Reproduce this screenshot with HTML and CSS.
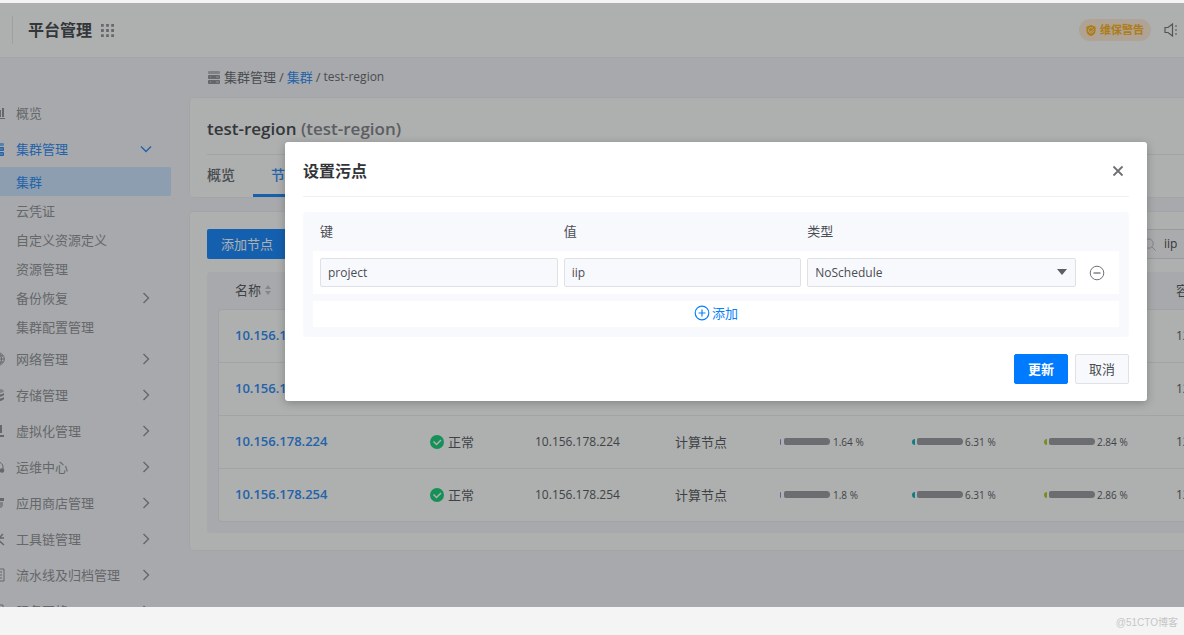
FILE: index.html
```html
<!DOCTYPE html>
<html lang="zh-CN">
<head>
<meta charset="utf-8">
<title>平台管理</title>
<link rel="stylesheet" href="styles.css">
</head>
<body>
<svg class="sprite" aria-hidden="true">
  <symbol id="right" viewBox="0 0 12 12"><path d="M3.5 1l5 5-5 5" fill="none" stroke="currentColor" stroke-width="1.4"/></symbol>
  <symbol id="down" viewBox="0 0 12 12"><path d="M1 3.5l5 5 5-5" fill="none" stroke="currentColor" stroke-width="1.4"/></symbol>
  <symbol id="server" viewBox="0 0 14 14"><rect x="1" y="1" width="12" height="3" rx="1" opacity=".6"/><rect x="1" y="5" width="12" height="4" rx="1"/><rect x="1" y="10" width="12" height="4" rx="1"/><path d="M3 7h1M3 12h1M9 7h3M9 12h3" stroke="#fff" stroke-width="1" opacity=".6"/></symbol>
  <symbol id="check" viewBox="0 0 14 14"><circle cx="7" cy="7" r="7"/><path d="M3.500 6.500l3 3 4.500-4.500" fill="none" stroke="#fff" stroke-width="1.500"/></symbol>
</svg>
<div class="app">
  <header class="topbar">
    <h1 class="brand">平台管理</h1>
    <svg class="dots" viewBox="0 0 14 14"><path d="M0 0h3v3H0zM5.500 0h3v3h-3zM11 0h3v3h-3zM0 5.500h3v3H0zM5.500 5.500h3v3h-3zM11 5.500h3v3h-3zM0 11h3v3H0zM5.500 11h3v3h-3zM11 11h3v3h-3z"/></svg>
    <span class="warn"><svg class="shield" viewBox="0 0 10 12"><path d="M5 0l5 2v4c0 3-2 5-5 6-3-1-5-3-5-6V2z"/><path d="M7.500 4A3 3 0 1 0 8 6.500M3.500 6l1.500 1.500 3-3" fill="none" stroke="#ffeed0" stroke-width="1"/></svg>维保警告</span>
    <svg class="speaker" viewBox="0 0 14 14" fill="none" stroke="currentColor" stroke-width="1.200"><path d="M1 4.500h3L8.500 1v12L4 9.500H1zM11 3h2M11 7h2M11 11h2" /></svg>
  </header>
  <div class="body">
    <nav class="side">
      <a class="item" href="#"><svg class="ico" viewBox="0 0 14 14"><path d="M1 12h13v1H1zM9 4h1v7H9zM11 2h2v9h-2z"/></svg><span>概览</span></a>
      <a class="item on" href="#"><svg class="ico"><use href="#server"/></svg><span>集群管理</span><svg class="arrow"><use href="#down"/></svg></a>
      <a class="item sub active" href="#"><span>集群</span></a>
      <a class="item sub" href="#"><span>云凭证</span></a>
      <a class="item sub" href="#"><span>自定义资源定义</span></a>
      <a class="item sub" href="#"><span>资源管理</span></a>
      <a class="item sub" href="#"><span>备份恢复</span><svg class="arrow"><use href="#right"/></svg></a>
      <a class="item sub" href="#"><span>集群配置管理</span></a>
      <a class="item" href="#"><svg class="ico" viewBox="0 0 14 14" fill="none" stroke="currentColor"><circle cx="7" cy="7" r="6.300"/><path d="M1 7h12M7 1v12M2 4h10M2 10h10"/><ellipse cx="7" cy="7" rx="3.500" ry="6.300"/></svg><span>网络管理</span><svg class="arrow"><use href="#right"/></svg></a>
      <a class="item" href="#"><svg class="ico" viewBox="0 0 14 14"><ellipse cx="7" cy="3" rx="6" ry="2" opacity=".6"/><path d="M1 5c2 2 10 2 12 0v2c-2 2.500-10 2.500-12 0zM1 9c2 2 10 2 12 0v2c-2 3-10 3-12 0z"/></svg><span>存储管理</span><svg class="arrow"><use href="#right"/></svg></a>
      <a class="item" href="#"><svg class="ico" viewBox="0 0 14 14"><path d="M5 1h6v8H5zM2 11h11v2H2z"/></svg><span>虚拟化管理</span><svg class="arrow"><use href="#right"/></svg></a>
      <a class="item" href="#"><svg class="ico" viewBox="0 0 14 14"><path d="M2 9V7a5 5 0 0 1 10 0v2" fill="none" stroke="currentColor"/><circle cx="11" cy="10.500" r="2.200"/></svg><span>运维中心</span><svg class="arrow"><use href="#right"/></svg></a>
      <a class="item" href="#"><svg class="ico" viewBox="0 0 14 14"><path d="M2 2h11v3H2z"/><path d="M3 6h9v4l-2 2H3z" opacity=".6"/></svg><span>应用商店管理</span><svg class="arrow"><use href="#right"/></svg></a>
      <a class="item" href="#"><svg class="ico" viewBox="0 0 14 14"><path d="M12 2L2 12M5 6l8 7M7 6h6" fill="none" stroke="currentColor" stroke-width="1.500"/></svg><span>工具链管理</span><svg class="arrow"><use href="#right"/></svg></a>
      <a class="item" href="#"><svg class="ico" viewBox="0 0 14 14" fill="none" stroke="currentColor"><path d="M2 1h11v12H2zM5 4h6M5 7h6M5 10h6"/></svg><span>流水线及归档管理</span><svg class="arrow"><use href="#right"/></svg></a>
      <a class="item" href="#"><svg class="ico" viewBox="0 0 14 14" fill="none" stroke="currentColor"><path d="M2 1h10v5H2zM2 8h10v5H2z"/></svg><span>服务网格</span><svg class="arrow"><use href="#right"/></svg></a>
    </nav>
    <main class="main">
      <div class="crumbs"><svg class="crumb-ico"><use href="#server"/></svg><span>集群管理</span><span>/</span><a href="#">集群</a><span>/</span><span class="latin">test-region</span></div>
      <section class="card">
        <h2 class="title">test-region <span>(test-region)</span></h2>
        <div class="tabs"><a class="tab" href="#">概览</a><a class="tab current" href="#">节点</a></div>
      </section>
      <section class="card">
        <div class="tools">
          <button class="add-node" type="button">添加节点</button>
          <label class="search"><svg viewBox="0 0 14 14" fill="none" stroke="currentColor"><circle cx="6" cy="6" r="5"/><path d="M9.500 9.500l4 4"/></svg><input type="text" value="iip" aria-label="搜索"></label>
        </div>
        <div class="panel">
          <table class="nodes">
            <colgroup><col class="c-name"><col class="c-status"><col class="c-ip"><col class="c-type"><col class="c-bar"><col class="c-bar"><col class="c-bar"><col></colgroup>
            <thead><tr><th>名称<svg class="sort" viewBox="0 0 8 10"><path d="M4 0l3 4H1zM4 10l3-4H1z"/></svg></th><th></th><th></th><th></th><th></th><th></th><th></th><th>容</th></tr></thead>
            <tbody>
              <tr><td><a href="#">10.156.178</a></td><td></td><td></td><td></td><td></td><td></td><td></td><td>12</td></tr>
              <tr><td><a href="#">10.156.178</a></td><td></td><td></td><td></td><td></td><td></td><td></td><td>12</td></tr>
              <tr><td><a href="#">10.156.178.224</a></td><td><span class="status"><svg><use href="#check"/></svg>正常</span></td><td>10.156.178.224</td><td class="cjk">计算节点</td>
                <td><span class="meter cpu"><i></i><b></b>1.64 %</span></td><td><span class="meter mem"><i></i><b></b>6.31 %</span></td><td><span class="meter disk"><i></i><b></b>2.84 %</span></td><td>12</td></tr>
              <tr><td><a href="#">10.156.178.254</a></td><td><span class="status"><svg><use href="#check"/></svg>正常</span></td><td>10.156.178.254</td><td class="cjk">计算节点</td>
                <td><span class="meter cpu"><i></i><b></b>1.8 %</span></td><td><span class="meter mem"><i></i><b></b>6.31 %</span></td><td><span class="meter disk"><i></i><b></b>2.86 %</span></td><td>12</td></tr>
            </tbody>
          </table>
        </div>
      </section>
    </main>
  </div>
  <div class="shade"></div>
  <div class="dialog" role="dialog" aria-labelledby="dlg-title">
    <div class="dlg-head">
      <h2 id="dlg-title">设置污点</h2>
      <button class="plain" type="button" aria-label="关闭"><svg viewBox="0 0 12 12" fill="none" stroke="currentColor" stroke-width="1.800"><path d="M1.500 1.500l9 9M10.500 1.500l-9 9"/></svg></button>
    </div>
    <div class="form">
      <div class="line labels"><label for="k">键</label><label for="v">值</label><label for="t">类型</label></div>
      <div class="line fields">
        <input class="field" id="k" type="text" value="project">
        <input class="field" id="v" type="text" value="iip">
        <div class="pick"><select class="field" id="t"><option>NoSchedule</option></select></div>
        <button class="plain minus" type="button" aria-label="删除"><svg viewBox="0 0 16 16" fill="none" stroke="currentColor"><circle cx="8" cy="8" r="6.800"/><path d="M4.500 8h7" stroke-width="1.300"/></svg></button>
      </div>
      <button class="add" type="button"><svg viewBox="0 0 16 16" fill="none" stroke="currentColor" stroke-width="1.200"><circle cx="8" cy="8" r="6.800"/><path d="M4.500 8h7M8 4.500v7"/></svg>添加</button>
    </div>
    <div class="dlg-foot"><button class="btn primary" type="button">更新</button><button class="btn" type="button">取消</button></div>
  </div>
</div>
<footer class="foot">@51CTO博客</footer>
</body>
</html>
```
FILE: styles.css
```css
* { box-sizing: border-box; }
body {
  margin: 0;
  height: 100vh;
  display: flex;
  flex-direction: column;
  overflow: hidden;
  background: #f4f4f4;
  color: #4a4d52;
  font: 13px/20px "Open Sans", "Noto Sans CJK SC", sans-serif;
}
a { color: #2f8ef8; text-decoration: none; }
button, input, select { font: inherit; color: inherit; }
h1, h2 { margin: 0; }
svg { flex: none; fill: currentColor; }
svg[fill="none"] { fill: none; }
.sprite { position: absolute; width: 0; height: 0; }

.app {
  position: relative;
  flex: 1;
  min-height: 0;
  margin-top: 3px;
  display: flex;
  flex-direction: column;
  overflow: hidden;
  background: #f6f7fb;
}
.topbar {
  display: flex;
  flex: none;
  align-items: center;
  height: 55px;
  padding: 0 6px 0 12px;
  background: #fff;
  border-bottom: 1px solid #eff0f2;
}
.brand { padding-left: 15px; border-left: 1px solid #e8e9ec; font-size: 16px; line-height: 28px; color: #494c51; }
.dots { width: 13px; height: 13px; margin-left: 9px; color: #96989d; }
.warn {
  display: flex;
  align-items: center;
  gap: 4px;
  height: 22px;
  margin-left: auto;
  padding: 0 7px;
  border-radius: 11px;
  background: #ffeed8;
  color: #ffb31c;
  font-size: 11px;
  font-weight: 600;
}
.shield { width: 10px; height: 11px; }
.speaker { width: 14px; height: 14px; margin-left: 13px; color: #77797e; }

.body { flex: 1; display: flex; min-height: 0; }
.side { flex: none; width: 189px; padding: 37px 18px 0 0; overflow: hidden; }
.item { display: flex; align-items: center; height: 36px; padding: 0 19px 0 16px; color: #929499; }
.item.sub { height: 29px; border-radius: 0 2px 2px 0; }
.item.on, .item.active { color: #2f8ef8; }
.item.active { background: #cde6ff; }
.ico { width: 14px; height: 14px; margin: 0 11px 0 -25px; }
.arrow { width: 12px; height: 12px; margin-left: auto; }

.main { flex: 1; min-width: 0; overflow: hidden; }
.crumbs { display: flex; align-items: center; gap: 3px; height: 39px; padding: 0 18px 2px; color: #6a6d72; }
.crumb-ico { width: 14px; height: 14px; color: #929499; }
.latin { font-size: 12px; }
.card {
  min-width: 1130px;
  margin-bottom: 13px;
  padding: 0 17px;
  background: #fff;
  border: 1px solid #f0f1f3;
  border-radius: 4px;
}
.title { padding: 19px 0 13px; border-bottom: 1px solid #eceef0; font-size: 17px; line-height: 24px; font-weight: 600; }
.title span { color: #85878c; }
.tabs { display: flex; height: 42px; gap: 18px; }
.tab { color: #6a6d72; font-size: 14px; font-weight: 500; line-height: 40px; }
.tab.current { width: 66px; padding-left: 18px; color: #2f8ef8; border-bottom: 3px solid #2089f8; }
.tools { display: flex; justify-content: space-between; padding: 17px 0 13px; }
.add-node { height: 30px; padding: 0 14px; border: 0; border-radius: 2px; background: #1a8aff; color: #fff; }
.search { display: flex; align-items: center; gap: 8px; width: 159px; height: 30px; border: 1px solid #dfe1e6; border-radius: 2px; background: #f9fafd; }
.search svg { width: 13px; height: 13px; color: #b5b8bd; }
.search input { width: 100px; padding: 0; border: 0; background: none; font-size: 12px; }
.panel { margin-bottom: 17px; padding: 0 11px 11px; border-radius: 4px; background: #f6f7fb; }
.nodes { width: 100%; table-layout: fixed; border-collapse: separate; border-spacing: 0; font-size: 12px; color: #5b5e63; }
.nodes th { height: 37px; padding: 0 0 2px; font-size: 13px; font-weight: 400; text-align: left; }
.nodes td { height: 53px; padding: 0 0 1px; background: #fff; border-top: 1px solid #eceef0; }
.nodes th:first-child { padding-left: 17px; }
.nodes td:first-child { padding-left: 16px; border-left: 1px solid #eceef0; }
.nodes tr:last-child td { height: 54px; border-bottom: 1px solid #eceef0; }
.nodes tbody tr:first-child td:first-child { border-top-left-radius: 4px; }
.nodes tr:last-child td:first-child { border-bottom-left-radius: 4px; }
.nodes a { font-size: 13px; font-weight: 600; }
.nodes .cjk { font-size: 13px; }
.c-name { width: 212px; }
.c-status { width: 105px; }
.c-ip { width: 140px; }
.c-type { width: 105px; }
.c-bar { width: 132px; }
.sort { width: 8px; height: 10px; margin-left: 3px; color: #c0c2c7; }
.status { display: flex; align-items: center; gap: 4px; font-size: 13px; }
.status svg { width: 14px; height: 14px; color: #1cd17c; }
.meter { display: flex; align-items: center; gap: 3px; font-size: 10px; }
.meter i { width: 1px; height: 6px; border-radius: 3px 0 0 3px; background: #8a86e8; }
.meter b { width: 46px; height: 7px; border-radius: 2px 4px 4px 2px; background: #9b9da1; }
.meter.mem, .meter.disk { gap: 2px; }
.meter.mem i { width: 3px; background: #18b4bc; }
.meter.disk i { width: 3px; background: #b4cc2c; }

.shade { position: absolute; inset: 0; background: rgba(8, 12, 12, .33); }
.dialog {
  position: absolute;
  top: 139px;
  left: 285px;
  right: 37px;
  padding: 0 18px 17px;
  border-radius: 3px;
  background: #fff;
  box-shadow: 0 2px 8px rgba(0, 0, 0, .25);
}
.dlg-head { display: flex; align-items: center; justify-content: space-between; height: 55px; padding: 4px 5px 0 0; border-bottom: 1px solid #eff0f2; }
.dlg-head h2 { font-size: 16px; line-height: 24px; color: #323437; }
.plain { display: flex; align-items: center; justify-content: center; padding: 0; border: 0; background: none; color: #6e7074; }
.dlg-head svg { width: 12px; height: 12px; }
.form { margin: 15px 0 17px; padding: 0 10px 10px; border-radius: 4px; background: #f8f9fd; }
.line { display: grid; grid-template-columns: 237fr 237fr 268fr 30px; gap: 6px; padding: 0 7px; }
.labels { height: 39px; padding-bottom: 1px; align-items: center; }
.fields { margin-bottom: 7px; padding: 7px; background: #fff; }
.field { width: 100%; min-width: 0; height: 29px; padding: 0 7px; border: 1px solid #dfe1e6; border-radius: 2px; background: #f8f9fd; font-size: 12px; appearance: none; }
.pick { position: relative; }
.pick::after { content: ""; position: absolute; right: 9px; top: 11px; border: 5px solid transparent; border-top: 6px solid #5c5e62; border-bottom: 0; pointer-events: none; }
.minus svg, .add svg { width: 16px; height: 16px; }
.add { display: flex; align-items: center; justify-content: center; gap: 2px; width: 100%; height: 26px; padding: 0 0 2px; border: 0; background: #fff; color: #0a80fa; }
.dlg-foot { display: flex; justify-content: flex-end; gap: 7px; }
.btn { width: 54px; height: 30px; padding: 0 0 1px; border: 1px solid #dfe1e6; border-radius: 2px; background: #f8f9fd; }
.btn.primary { border-color: #007bff; background: #007bff; color: #fff; font-weight: 700; }

.foot { flex: none; height: 28px; padding: 5px 6px 0 0; color: #c6c6c6; font: 10px/22px "Liberation Sans", "Noto Sans CJK SC", sans-serif; text-align: right; }
```
